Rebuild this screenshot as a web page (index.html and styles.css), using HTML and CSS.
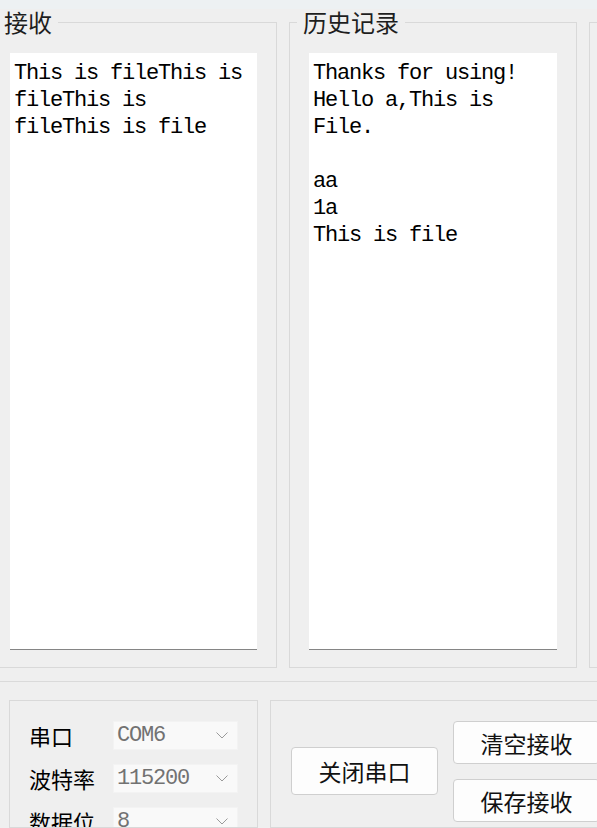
FILE: index.html
```html
<!DOCTYPE html>
<html lang="zh-CN">
<head>
<meta charset="utf-8">
<title>串口助手</title>
<link rel="stylesheet" href="styles.css">
</head>
<body>
<div class="titlebar"></div>
<div class="panels">
  <fieldset class="group group-first">
    <legend>接收</legend>
    <div class="text-box">This is fileThis is
fileThis is
fileThis is file</div>
  </fieldset>
  <fieldset class="group">
    <legend>历史记录</legend>
    <div class="text-box">Thanks for using!
Hello a,This is
File.

aa
1a
This is file</div>
  </fieldset>
  <fieldset class="group">
    <legend class="legend-empty"></legend>
    <div class="text-box"></div>
  </fieldset>
</div>
<div class="separator"></div>
<div class="controls">
  <div class="box settings">
    <div class="setting-row">
      <span class="label">串口</span>
      <div class="combo"><span>COM6</span><svg class="chev" width="12" height="7" viewBox="0 0 12 7"><polyline points="0.5,0.5 6,6 11.5,0.5" fill="none" stroke="#9a9a9a" stroke-width="1"/></svg></div>
    </div>
    <div class="setting-row">
      <span class="label">波特率</span>
      <div class="combo"><span>115200</span><svg class="chev" width="12" height="7" viewBox="0 0 12 7"><polyline points="0.5,0.5 6,6 11.5,0.5" fill="none" stroke="#9a9a9a" stroke-width="1"/></svg></div>
    </div>
    <div class="setting-row">
      <span class="label">数据位</span>
      <div class="combo"><span>8</span><svg class="chev" width="12" height="7" viewBox="0 0 12 7"><polyline points="0.5,0.5 6,6 11.5,0.5" fill="none" stroke="#9a9a9a" stroke-width="1"/></svg></div>
    </div>
  </div>
  <div class="box actions">
    <button class="btn btn-tall">关闭串口</button>
    <div class="btn-col">
      <button class="btn">清空接收</button>
      <button class="btn">保存接收</button>
    </div>
  </div>
</div>
</body>
</html>
```
FILE: styles.css
```css
html, body {
  margin: 0;
  padding: 0;
  overflow: hidden;
}
body {
  width: 597px;
  height: 828px;
  background: #efefef;
  font-family: "Noto Sans CJK SC", "Noto Sans", sans-serif;
  color: #111;
}
.titlebar {
  height: 9px;
  background: #edf1f3;
}
.panels {
  display: flex;
  gap: 12px;
  margin-top: 1px;
  margin-left: -10px;
  width: 1000px;
}
.group {
  box-sizing: border-box;
  flex: none;
  width: 288px;
  height: 658px;
  margin: 0;
  padding: 19px 19px 17px 19px;
  border: 1px solid #d9d9d9;
  min-width: 0;
}
.group-first {
  width: 287px;
}
.group legend {
  padding: 0 6px;
  margin-left: -12px;
  font-size: 24px;
  line-height: 24px;
  color: #1e1e1e;
}
.group .legend-empty {
  height: 24px;
  width: 40px;
  padding: 0;
}
.text-box {
  box-sizing: border-box;
  height: 597px;
  background: #fff;
  border-bottom: 1px solid #858585;
  padding: 7px 4px 0 4px;
  white-space: pre-wrap;
  font-family: "Liberation Mono", monospace;
  font-size: 22px;
  letter-spacing: -1.2px;
  line-height: 27px;
  color: #000;
}
.separator {
  margin-top: 13px;
  height: 1px;
  background: #dadada;
}
.controls {
  display: flex;
  gap: 12px;
  margin-top: 18px;
  padding-left: 9px;
}
.box {
  box-sizing: border-box;
  flex: none;
  border: 1px solid #d9d9d9;
  height: 128px;
}
.settings {
  width: 249px;
  padding: 20px 0 0 19px;
  display: flex;
  flex-direction: column;
  gap: 14px;
  overflow: hidden;
}
.setting-row {
  flex: none;
  display: grid;
  grid-template-columns: 84px 125px;
  align-items: center;
  height: 29px;
}
.label {
  font-size: 22px;
  line-height: 29px;
  color: #000;
}
.combo {
  box-sizing: border-box;
  height: 29px;
  background: #f9f9f9;
  border: 1px solid #f3f3f3;
  display: flex;
  align-items: center;
  justify-content: space-between;
  padding: 0 9px 0 3px;
  font-family: "Liberation Mono", monospace;
  font-size: 22px;
  letter-spacing: -1.2px;
  color: #727272;
}
.chev {
  display: block;
}
.actions {
  width: 400px;
  padding: 20px 0 0 20px;
  display: flex;
  align-items: flex-start;
  gap: 15px;
}
.btn-col {
  display: flex;
  flex-direction: column;
  gap: 15px;
}
.btn {
  box-sizing: border-box;
  width: 147px;
  height: 43px;
  background: #fdfdfd;
  border: 1px solid #cfcfcf;
  border-radius: 4px;
  font-family: "Noto Sans CJK SC", sans-serif;
  font-size: 23px;
  color: #111;
  padding: 0;
  margin: 0;
}
.btn-tall {
  height: 48px;
  margin-top: 26px;
}
```
